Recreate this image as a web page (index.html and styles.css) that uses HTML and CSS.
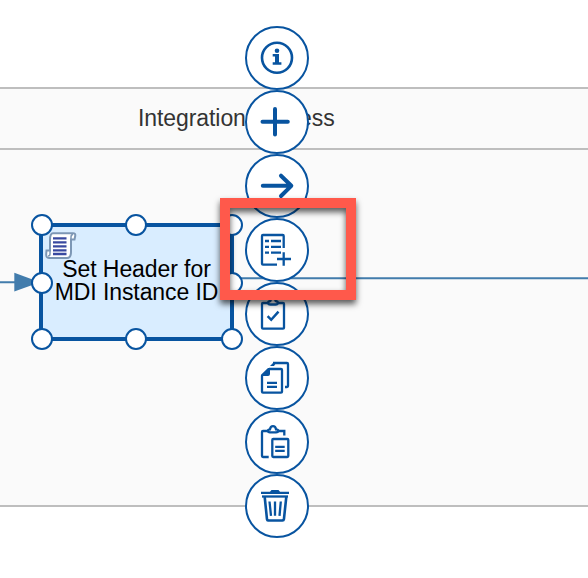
FILE: index.html
```html
<!DOCTYPE html>
<html lang="en">
<head>
<meta charset="utf-8">
<title>Integration Process</title>
<link rel="stylesheet" href="styles.css">
</head>
<body>
<main class="canvas">
  <section class="pool">
    <header class="pool-title">Integration Process</header>
    <div class="pool-body"></div>
  </section>

  <svg class="flows" viewBox="0 0 588 578">
    <path class="flow" d="M0 282.3H20M230 278.3H588"/>
    <path class="flow-head" d="M14.3 272.7L40 282.2L14.3 291.5Z"/>
  </svg>

  <div class="task">
    <svg class="script-icon" viewBox="0 0 32 28">
      <path class="paper" d="M8 1.2H28Q30.700 1.200 30.200 4L29.500 7.500H26V20Q26 26 22 26H4Q1 26 1.200 22L1.500 18.500H5V8Q5 1.200 8 1.200Z"/>
      <path class="curl" d="M26 8V5Q26 2.500 28 2.500M5 18V22Q5 24 3 24M4 25.800H22"/>
      <path class="ink" d="M8 6.300H21.500M8 10.300H21.500M8 14.300H21.500M8 18.300H21.500M8 22H21.500"/>
    </svg>
    <span class="task-name">Set Header for<br>MDI Instance ID</span>
  </div>

  <svg class="handles" viewBox="0 0 588 578">
    <circle cx="42" cy="225" r="10"/><circle cx="136" cy="225" r="10"/><circle cx="232" cy="225" r="10"/>
    <circle cx="42" cy="283" r="10"/><circle cx="232" cy="283" r="10"/>
    <circle cx="42" cy="339" r="10"/><circle cx="136" cy="339" r="10"/><circle cx="232" cy="339" r="10"/>
  </svg>

  <nav class="speed-menu">
    <button class="action" aria-label="Information"><svg viewBox="0 0 64 64">
      <circle cx="32" cy="31.800" r="15" stroke-width="2.600"/>
      <circle class="solid" cx="32" cy="24.800" r="2.300"/>
      <path class="solid" d="M27.700 28H34V36.200H36.400V38.800H27.700V36.200H30V30.400H27.700Z"/>
    </svg></button>
    <button class="action" aria-label="Add"><svg viewBox="0 0 64 64">
      <path d="M17.500 31.800H42.800M30 19V44.600" stroke-width="4" stroke-linecap="round"/>
    </svg></button>
    <button class="action" aria-label="Connect"><svg viewBox="0 0 64 64">
      <path d="M17.800 31.800H46M36 21.700L46.300 31.800L36 42" stroke-width="4" stroke-linecap="round" stroke-linejoin="round"/>
    </svg></button>
    <button class="action" aria-label="Add property"><svg viewBox="0 0 64 64">
      <path d="M38.700 30V18Q38.700 17 37.700 17H18Q17 17 17 18V45.700Q17 46.700 18 46.700H32M38.700 34.300V47.700M32 41H46"/>
      <path d="M20 23H24M26 23H36M20 28.800H24M26 28.800H36M20 34.700H24M26 34.700H36"/>
    </svg></button>
    <button class="action" aria-label="Validate"><svg viewBox="0 0 64 64">
      <rect x="17" y="21" width="22" height="25.700" rx="1"/>
      <path class="cover" d="M25.500 22.500Q23.200 22.500 23.200 20.800Q23.200 19.200 25.200 19.200Q25.500 16.500 28 16.500Q30.500 16.500 30.800 19.200Q32.800 19.200 32.800 20.800Q32.800 22.500 30.500 22.500Z"/>
      <path d="M22.600 34.200L26.200 37.800L33.500 29.700" stroke-width="2.500"/>
    </svg></button>
    <button class="action" aria-label="Copy"><svg viewBox="0 0 64 64">
      <path d="M24 23H36Q37 23 37 24V45.700Q37 46.700 36 46.700H18Q17 46.700 17 45.700V29.500M28 17H42Q43 17 43 18V40Q43 41 42 41H40"/>
      <path class="solid" d="M23 22H25V28Q25 30 23 30H16V28.800ZM29 16L25 20H29L31 17Z"/>
      <path d="M22 36.800H32M22 40.800H32"/>
    </svg></button>
    <button class="action" aria-label="Paste"><svg viewBox="0 0 64 64">
      <path d="M39.300 25.500V21H18Q17 21 17 22V46Q17 47 18 47H23.700"/>
      <path class="cover" d="M25 22.300Q23 22.300 23 20.700Q23 19.300 25 19.300Q25.500 16.200 28 16.200Q30.500 16.200 31 19.300Q33.200 19.300 33.200 20.700Q33.200 22.300 31 22.300Z"/>
      <rect x="27.300" y="29" width="16" height="18" rx="1"/>
      <path d="M30.200 36.800H39.700M30.200 40.800H39.700"/>
    </svg></button>
    <button class="action" aria-label="Delete"><svg viewBox="0 0 64 64">
      <path class="solid" d="M16 17.700H25L26.500 16H33.500L35 17.700H44V20H16Z"/>
      <path d="M17 22.500H43"/>
      <path d="M19.700 23L22 45.300Q22.200 46.500 23 46.500H37.500Q38.700 46.500 38.900 45.300L41.300 23" stroke-width="2.600"/>
      <path d="M24.500 27.500L26 41.800M30 27.500V41.800M35.800 27.500L34.500 41.800"/>
    </svg></button>
  </nav>

  <div class="highlight"></div>
</main>
</body>
</html>
```
FILE: styles.css
```css
body {
  margin: 0;
  background: #fff;
  font-family: "Liberation Sans", Arial, sans-serif;
}
.canvas {
  position: relative;
  width: 588px;
  height: 578px;
  overflow: hidden;
}
.pool {
  box-sizing: border-box;
  height: 507px;
  padding-top: 87px;
  display: flex;
  flex-direction: column;
}
.pool-title {
  box-sizing: border-box;
  height: 63px;
  padding-left: 138px;
  border: solid #bebebe;
  border-width: 2px 0;
  background: #fafafa;
  color: #333;
  font-size: 23px;
  letter-spacing: -0.08px;
  line-height: 58px;
}
.pool-body {
  flex: 1;
  background: #fafafa;
  border-bottom: 2px solid #bebebe;
}
.flows, .handles {
  position: absolute;
  left: 0;
  top: 0;
  width: 588px;
  height: 578px;
}
.flow { stroke: #427cac; stroke-width: 2; }
.flow-head { fill: #427cac; }
.task {
  position: absolute;
  left: 39px;
  top: 223px;
  box-sizing: border-box;
  width: 195px;
  height: 118px;
  padding-bottom: 3px;
  border: 4px solid #0854a0;
  background: #d9edff;
  display: flex;
  justify-content: center;
  align-items: center;
  text-align: center;
}
.task-name {
  color: #000;
  font-size: 23px;
  letter-spacing: -0.08px;
  line-height: 23px;
  white-space: nowrap;
}
.script-icon {
  position: absolute;
  left: 1.5px;
  top: 5px;
  width: 32px;
  height: 28px;
  fill: none;
}
.paper { fill: #fff; stroke: #7d97b5; stroke-width: 2; }
.curl { stroke: #7d97b5; stroke-width: 1.5; }
.ink { stroke: #3949a0; stroke-width: 2.3; }
.handles circle {
  fill: #fff;
  stroke: #0854a0;
  stroke-width: 2;
}
.speed-menu {
  position: absolute;
  left: 245px;
  top: 26px;
  display: flex;
  flex-direction: column;
}
.action {
  box-sizing: border-box;
  width: 64px;
  height: 64px;
  padding: 0;
  border: 2px solid #0854a0;
  border-radius: 50%;
  background: #fff;
}
.action svg {
  display: block;
  width: 64px;
  height: 64px;
  margin: -2px;
  fill: none;
  stroke: #0854a0;
  stroke-width: 2.3;
}
.action .solid { fill: #0854a0; stroke: none; }
.action .cover { fill: #fff; }
.highlight {
  position: absolute;
  left: 220px;
  top: 198px;
  box-sizing: border-box;
  width: 136px;
  height: 102px;
  border: 10px solid #ff594b;
  filter: drop-shadow(0 4px 3px rgba(0, 0, 0, 0.65));
}
```
